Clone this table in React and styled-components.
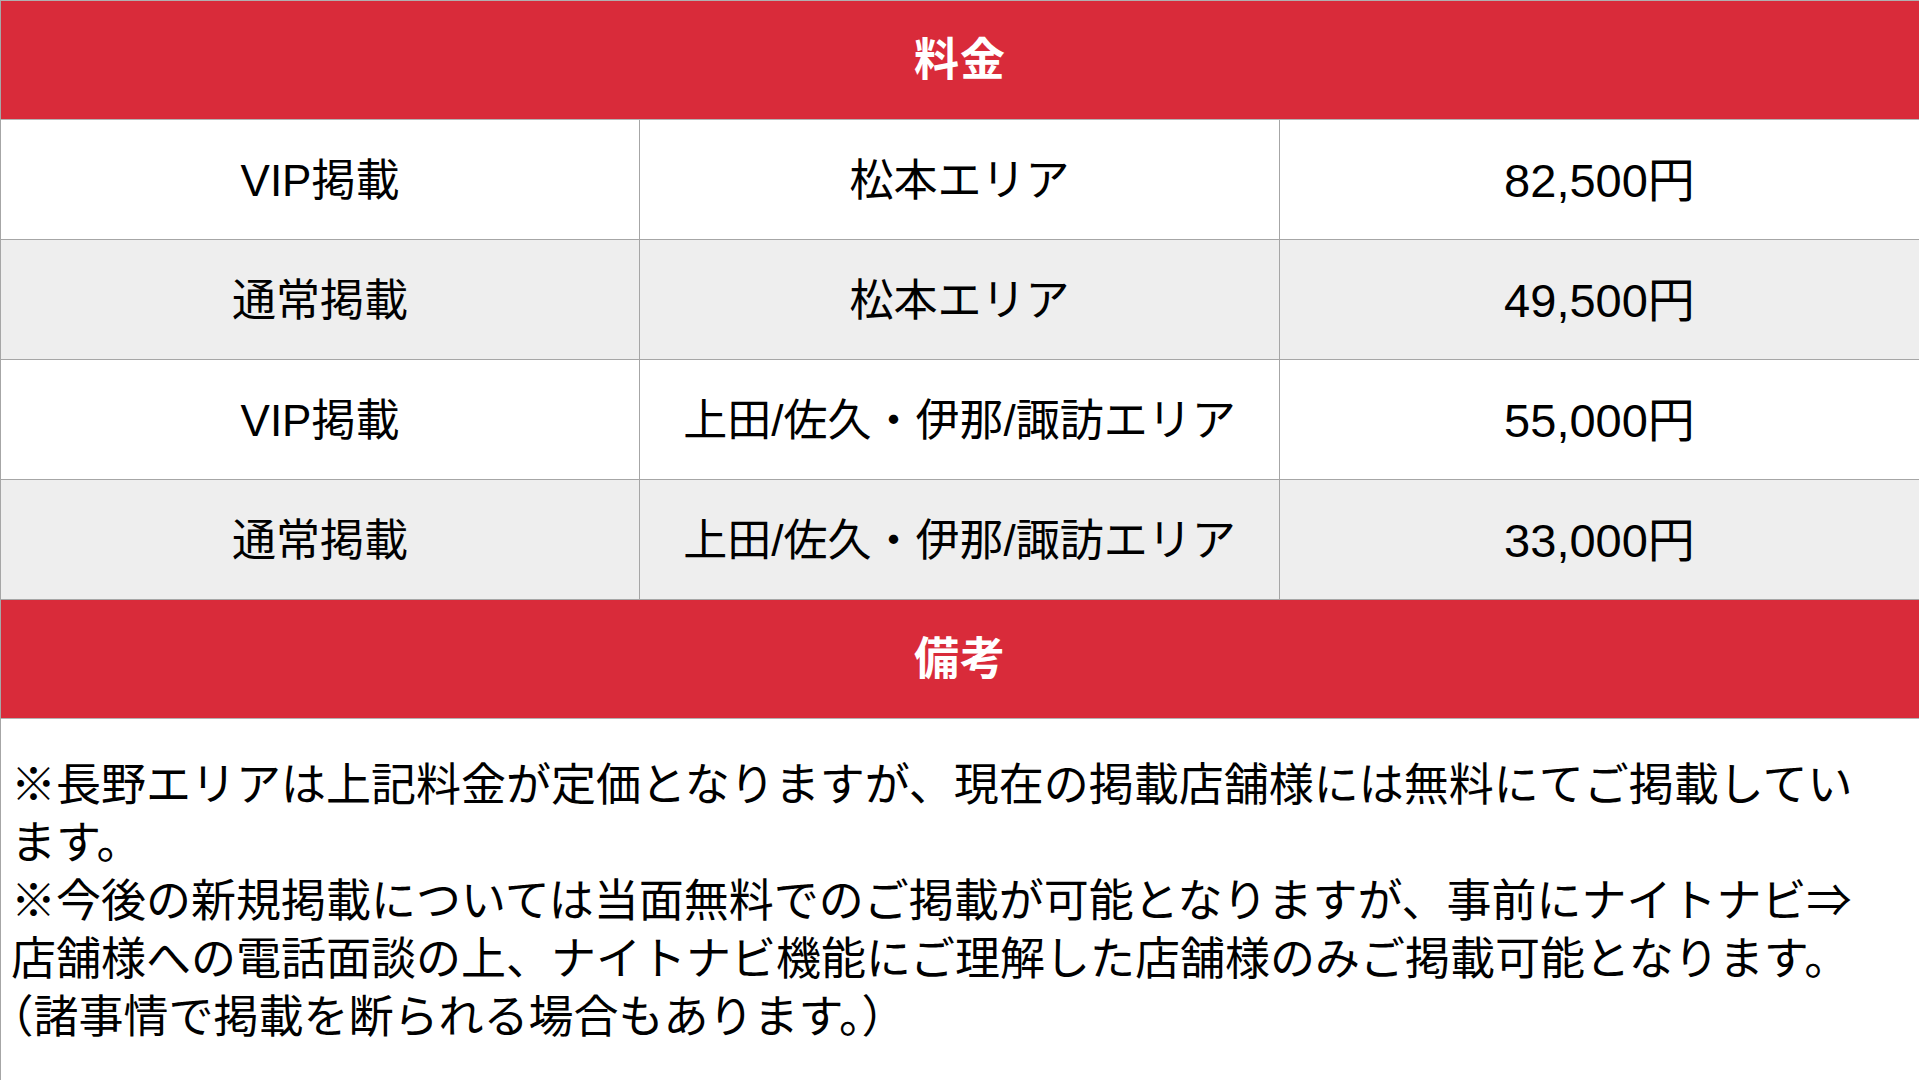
import React from 'react';
import styled, { createGlobalStyle } from 'styled-components';

const GlobalStyle = createGlobalStyle`
  html, body {
    margin: 0;
    padding: 0;
    background: #ffffff;
  }
  body {
    font-family: "Liberation Sans", "Noto Sans CJK JP", sans-serif;
    color: #000000;
  }
`;

const Sheet = styled.div`
  width: 1919px;
  height: 1080px;
  box-sizing: border-box;
  border-left: 1px solid #a6a6a6;
  border-top: 1px solid #b0b0b0;
  display: flex;
  flex-direction: column;
  overflow: hidden;
`;

const Banner = styled.div`
  height: 119px;
  flex-shrink: 0;
  box-sizing: border-box;
  padding-bottom: 8px;
  background: #d92b3a;
  border-bottom: 1px solid #b3b3b3;
  display: flex;
  align-items: center;
  justify-content: center;
  color: #ffffff;
  font-weight: 700;
  font-size: 45px;
  letter-spacing: 1px;
`;

const Row = styled.div`
  height: 120px;
  flex-shrink: 0;
  box-sizing: border-box;
  display: grid;
  grid-template-columns: 639px 640px 1fr;
  background: ${(p) => (p.$shaded ? '#eeeeee' : '#ffffff')};
  border-bottom: 1px solid #a6a6a6;
`;

const Cell = styled.div`
  display: flex;
  align-items: center;
  justify-content: center;
  box-sizing: border-box;
  padding-bottom: 6px;
  font-size: ${(p) => (p.$price ? '47px' : '44px')};
  border-right: ${(p) => (p.$price ? 'none' : '1px solid #a6a6a6')};
  white-space: nowrap;
`;

const Notes = styled.div`
  flex: 1;
  padding: 38px 0 0 10px;
  font-size: 45px;
  line-height: 58px;
`;

const Line = styled.div`
  white-space: nowrap;
`;

const Paren = styled.span`
  font-feature-settings: "halt";
`;

const rows = [
  ['VIP掲載', '松本エリア', '82,500円'],
  ['通常掲載', '松本エリア', '49,500円'],
  ['VIP掲載', '上田/佐久・伊那/諏訪エリア', '55,000円'],
  ['通常掲載', '上田/佐久・伊那/諏訪エリア', '33,000円'],
];

const notes = [
  '※長野エリアは上記料金が定価となりますが、現在の掲載店舗様には無料にてご掲載してい',
  'ます。',
  '※今後の新規掲載については当面無料でのご掲載が可能となりますが、事前にナイトナビ⇒',
  '店舗様への電話面談の上、ナイトナビ機能にご理解した店舗様のみご掲載可能となります。',
];

export default function App() {
  return (
    <>
      <GlobalStyle />
      <Sheet>
        <Banner>料金</Banner>
        {rows.map((r, i) => (
          <Row key={i} $shaded={i % 2 === 1}>
            <Cell>{r[0]}</Cell>
            <Cell>{r[1]}</Cell>
            <Cell $price>{r[2]}</Cell>
          </Row>
        ))}
        <Banner>備考</Banner>
        <Notes>
          {notes.map((n, i) => (
            <Line key={i}>{n}</Line>
          ))}
          <Line>
            <Paren>（</Paren>諸事情で掲載を断られる場合もあります。<Paren>）</Paren>
          </Line>
        </Notes>
      </Sheet>
    </>
  );
}
